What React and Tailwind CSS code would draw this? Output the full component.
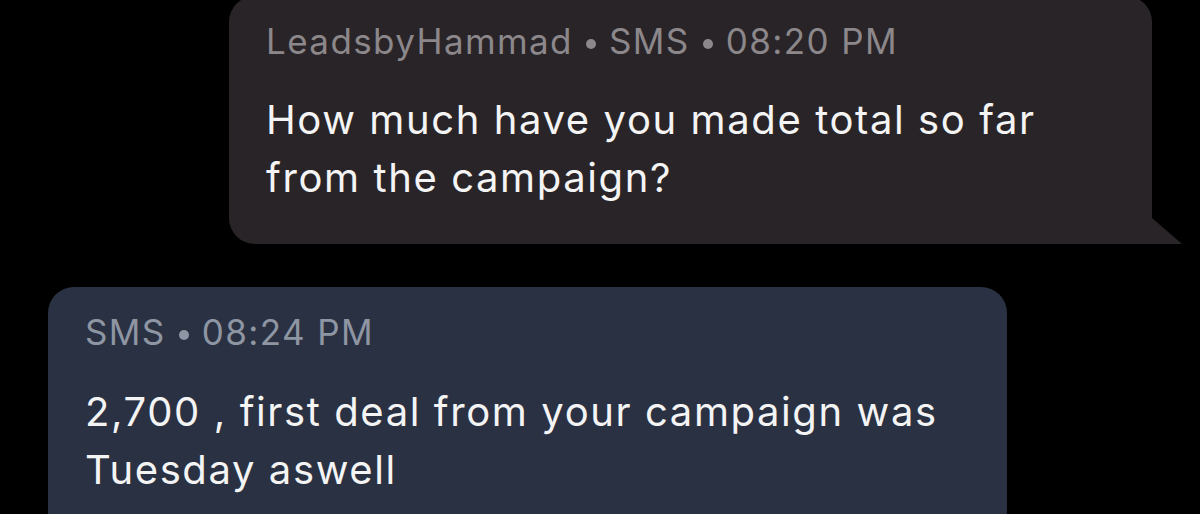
function Dot() {
  return <span className="inline-block w-[10px] h-[10px] rounded-full bg-current mx-[13px] align-middle" />;
}

export default function App() {
  return (
    <div
      className="w-[1200px] h-[514px] overflow-hidden bg-black flex flex-col"
      style={{ fontFamily: 'Inter, "Noto Sans", sans-serif' }}
    >
      <div className="relative mt-[-4px] ml-[229px] w-[923px] bg-[#292427] rounded-[26px] rounded-br-none pl-[37px] pt-[25px] pb-[37px]">
        <div className="text-[35px] leading-[40px] text-[#8b878a] tracking-[1.4px] whitespace-nowrap">
          <span>LeadsbyHammad</span>
          <Dot />
          <span>SMS</span>
          <Dot />
          <span>08:20 PM</span>
        </div>
        <div className="mt-[30px] text-[40px] leading-[58px] text-[#f4f4f5] tracking-[1.6px]">
          <div>How much have you made total so far</div>
          <div>from the campaign?</div>
        </div>
        <svg className="absolute right-[-30px] bottom-0" width="30" height="26" viewBox="0 0 30 26">
          <polygon points="0,0 30,26 0,26" fill="#292427" />
        </svg>
      </div>
      <div className="mt-[43px] ml-[48px] w-[959px] bg-[#2a3142] rounded-[26px] pl-[37px] pt-[25px] pb-[38px]">
        <div className="text-[35px] leading-[40px] text-[#8e95a3] tracking-[1.4px] whitespace-nowrap">
          <span>SMS</span>
          <Dot />
          <span>08:24 PM</span>
        </div>
        <div className="mt-[31px] text-[40px] leading-[58px] text-[#f4f4f5] tracking-[1.6px]">
          <div>2,700 , first deal from your campaign was</div>
          <div>Tuesday aswell</div>
        </div>
      </div>
    </div>
  );
}
